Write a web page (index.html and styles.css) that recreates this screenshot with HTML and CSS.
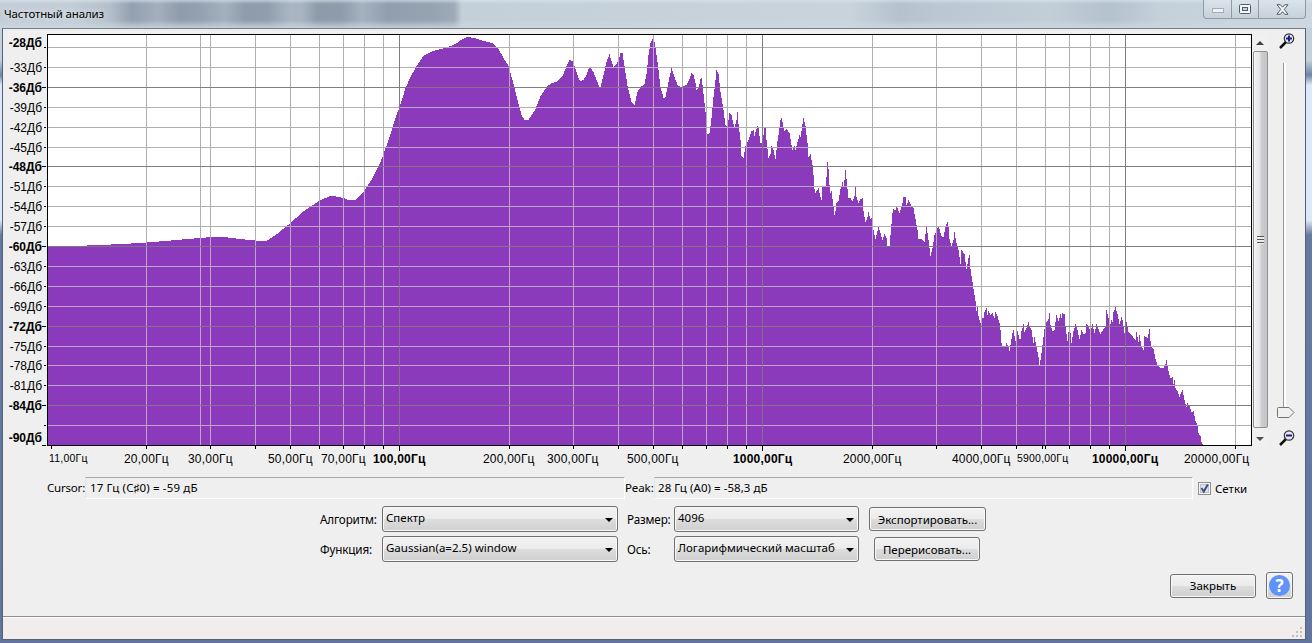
FILE: index.html
```
<!DOCTYPE html>
<html lang="ru">
	<head>
		<meta charset="UTF-8" />
		<title>Частотный анализ</title>
		<link rel="stylesheet" href="styles.css">
	</head>
	<body>
		<div class="window">
			<header class="titlebar">
				<span class="title">Частотный анализ</span>
				<div class="window-buttons">
					<span class="win-btn min"><svg width="12" height="5"><rect x=".5" y=".5" width="11" height="4" fill="#eef2f6" stroke="#a4adb8" /></svg></span>
					<span class="win-btn max"><svg width="12" height="10"><rect x=".5" y=".5" width="11" height="9" rx="1" fill="#f4f6f8" stroke="#535c6a" /><rect x="3.5" y="3.5" width="5" height="3" fill="#c4d0da" stroke="#535c6a" /></svg></span>
					<span class="win-btn close"><svg width="13" height="11" viewBox="0 0 13 11"><path d="M1 .7h3.300l2.200 2.500L8.700 .7H12L8.300 5.400 12 10.300H8.700L6.500 7.700 4.300 10.300H1l3.700-4.900z" fill="#f4f6f8" stroke="#535c6a" /></svg></span>
				</div>
			</header>

			<main class="client">
				<div class="plot-row">
					<svg class="plot" width="1249" height="442" viewBox="3 29 1249 442">
						<rect x="47" y="34" width="1205" height="412" fill="#fff" />
						<path id="spectrum" class="spectrum" />
						<g id="grid"></g>
						<path class="frame" d="M47.500 446V34.500H1251.500V445.500H47" />
						<g id="labels"></g>
					</svg>
					<div class="scrollbar">
						<i class="arrow up"></i>
						<div class="thumb"><i class="grip"></i></div>
						<i class="arrow down"></i>
					</div>
					<div class="zoom">
						<svg width="16" height="16" viewBox="0 0 16 16"><path d="M1 15l6-6" stroke="#111" stroke-width="2.500" /><circle cx="10" cy="5.500" r="4.700" fill="#e9e9fb" stroke="#333" stroke-width="1.200" /><path d="M7 5.500h6M10 2.500v6" stroke="#1c1c84" stroke-width="2" /></svg>
						<div class="slider">
							<svg class="slider-thumb" width="18" height="11" viewBox="0 0 18 11"><path d="M1.500 .5H12l5 5-5 5H1.500a1 1 0 0 1-1-1v-8a1 1 0 0 1 1-1z" fill="#f0f0f0" stroke="#747474" /></svg>
						</div>
						<svg width="16" height="16" viewBox="0 0 16 16"><path d="M1 15l6-6" stroke="#111" stroke-width="2.500" /><circle cx="10" cy="5.500" r="4.700" fill="#e9e9fb" stroke="#333" stroke-width="1.200" /><path d="M7 5.500h6" stroke="#1c1c84" stroke-width="2" /></svg>
					</div>
				</div>

				<div class="readouts">
					<span class="cursor-label">Cursor:</span>
					<div class="readout cursor">17 Гц (C♯0) = -59 дБ</div>
					<span class="peak-label">Peak:</span>
					<div class="readout peak">28 Гц (A0) = -58,3 дБ</div>
					<label class="grids">
						<svg width="13" height="13"><rect x=".5" y=".5" width="12" height="12" fill="#f6f6f6" stroke="#8e8f8f" /><rect x="2.500" y="2.500" width="8" height="8" fill="#dfe4ea" stroke="#b9c3cf" /><path d="M3.500 6l2.300 3.500L9.800 2.500" fill="none" stroke="#3d5082" stroke-width="2" /></svg>
						<span>Сетки</span>
					</label>
				</div>

				<div class="options">
					<span class="opt-label">Алгоритм:</span>
					<div class="select">Спектр</div>
					<span class="opt-label second">Размер:</span>
					<div class="select">4096</div>
					<button class="export">Экспортировать...</button>
					<span class="opt-label">Функция:</span>
					<div class="select">Gaussian(a=2.5) window</div>
					<span class="opt-label second">Ось:</span>
					<div class="select">Логарифмический масштаб</div>
					<button class="redraw">Перерисовать...</button>
				</div>

				<div class="actions">
					<button class="close-btn">Закрыть</button>
					<button class="help"><span>?</span></button>
				</div>

				<footer class="statusbar">
					<svg width="11" height="11"><path d="M8 1h2v2H8zM8 5h2v2H8zM8 9h2v2H8zM4 5h2v2H4zM4 9h2v2H4zM0 9h2v2H0z" fill="#c3bfbf" /></svg>
				</footer>
			</main>
		</div>

		<script src="plot.js"></script>
	</body>
</html>
```

FILE: styles.css
```
body {
	margin: 0;
	overflow: hidden;
	font-family: "Noto Sans", "Open Sans", sans-serif;
	font-size: 12px;
	color: #000;
}
.window {
	box-sizing: border-box;
	width: 1312px;
	height: 643px;
	padding: 0 6px 3px 2px;
	background: linear-gradient(#c4d0da 0 60px, #6b86a8 75px, #dde8f8 85px 220px, #66799f 235px, #62759c);
}
.titlebar {
	display: flex;
	justify-content: space-between;
	height: 28px;
	margin: 0 -6px 0 -2px;
	background:
		linear-gradient(rgba(220, 230, 238, 0.6), transparent 4px 20px, rgba(205, 216, 225, 0.8)),
		linear-gradient(90deg, #c3cdd7 0 70px, #b3bfca 110px, #93a0af 132px, #a3afbc 158px, #8f9cab 180px, #94a1b0 200px, #a3b0bd 225px, #8f9cab 245px, #919eae 268px, #a9b6c2 290px, #a7b4c1 302px, #8d9aa9 318px, #8f9cab 342px, #a4b1be 362px, #919eae 388px, #95a3b1 430px, #9daab7 454px, #c4d0d9 462px, #c8d3dc 850px, #b5c2ce 900px, #bbc8d3 940px, #c2ced8 1050px, #b4c2ce 1110px, #c4d0da 1160px, #ccd7e0);
}
.title {
	padding: 6px 0 0 4px;
	line-height: 16px;
	font-size: 11.500px;
	letter-spacing: -0.150px;
	text-shadow: 0 0 6px #fff;
}
.window-buttons {
	display: flex;
	box-sizing: border-box;
	width: 103px;
	height: 19px;
	margin-right: 6px;
	border: 1px solid #8f9aa6;
	border-top: 0;
	border-radius: 0 0 4px 4px;
	background: linear-gradient(#dbe3ea, #c6d1db);
}
.win-btn {
	display: flex;
	align-items: center;
	justify-content: center;
	width: 27px;
	border-right: 1px solid #8f9aa6;
}
.win-btn.min {
	align-items: flex-end;
	padding-bottom: 5px;
	height: 13px;
}
.win-btn.max {
	width: 26px;
}
.win-btn.close {
	width: 46px;
	border: 0;
}
.client {
	box-sizing: border-box;
	height: 612px;
	border: 1px solid #55607a;
	border-top-color: #757e88;
	background: #efefef;
	display: flex;
	flex-direction: column;
}
.plot-row {
	display: flex;
	height: 442px;
}
.plot {
	flex: none;
	shape-rendering: crispEdges;
}
.spectrum {
	fill: #8b3abc;
}
.frame {
	fill: none;
	stroke: #000;
}
.minor {
	fill: #afafaf;
}
.major {
	fill: #7f7f7f;
}
.inside .minor {
	fill: #bda4c8;
}
.inside .major {
	fill: #88708a;
}
.plot text {
	font-family: "Liberation Sans", Arial, sans-serif;
	font-size: 12px;
}
.plot .freq {
	letter-spacing: 0.200px;
}
.plot text.bold {
	font-weight: bold;
}
.plot text.small {
	font-size: 10.500px;
}
.scrollbar {
	display: flex;
	flex-direction: column;
	align-items: center;
	width: 17px;
	height: 412px;
	margin-top: 5px;
	background: #f0f0f0;
}
.arrow {
	border: 4px solid transparent;
}
.arrow.up {
	margin: 7px 0 6px;
	border-top: 0;
	border-bottom-color: #404040;
}
.arrow.down {
	margin-top: 9px;
	border-bottom: 0;
	border-top-color: #505050;
}
.thumb {
	display: flex;
	align-items: center;
	justify-content: center;
	box-sizing: border-box;
	width: 15px;
	height: 377px;
	border: 1px solid #8f8f8f;
	border-radius: 2px;
	background: linear-gradient(90deg, #f4f4f4, #e4e4e6 45%, #cdced1 55%, #c2c3c7);
}
.grip {
	width: 7px;
	height: 8px;
	background: repeating-linear-gradient(#555 0 1px, #eee 1px 3px);
}
.zoom {
	display: flex;
	flex-direction: column;
	align-items: center;
	width: 36px;
	padding: 4px 0 0 1px;
}
.slider {
	width: 2px;
	height: 355px;
	margin: 14px 5px 12px 0;
	border-left: 1px solid #999;
	background: #fff;
}
.slider-thumb {
	display: block;
	margin: 344px 0 0 -7px;
}
.readouts {
	display: flex;
	align-items: flex-start;
	height: 35px;
	padding: 6px 0 0 44px;
	line-height: 21px;
	font-size: 11.500px;
	box-sizing: border-box;
}
.cursor-label {
	width: 38px;
	letter-spacing: -0.200px;
}
.peak-label {
	width: 29px;
	letter-spacing: -0.100px;
}
.readout {
	box-sizing: border-box;
	height: 22px;
	padding-left: 4px;
	border: 1px solid #fff;
	border-top-color: #a8a8a8;
	border-left-color: #e6e6e6;
	line-height: 20px;
}
.readout.cursor {
	width: 540px;
	letter-spacing: 0.150px;
}
.readout.peak {
	width: 539px;
	padding-left: 3px;
	letter-spacing: 0.050px;
}
.grids {
	display: flex;
	align-items: center;
	gap: 4px;
	height: 22px;
	margin-left: 5px;
}
.options {
	display: grid;
	grid-template-columns: 62px 236px 56px 185px 136px;
	grid-auto-rows: 26px;
	row-gap: 4px;
	align-items: center;
	padding-left: 317px;
}
.opt-label {
	font-size: 11.700px;
	letter-spacing: -0.150px;
}
.opt-label.second {
	padding-left: 9px;
}
.select {
	position: relative;
	box-sizing: border-box;
	height: 26px;
	padding-left: 3px;
	border: 1px solid #707070;
	border-radius: 3px;
	background: linear-gradient(#f3f3f3, #ebebeb 48%, #dddddd 52%, #cfcfcf);
	box-shadow: inset 0 0 0 1px #f8f8f8;
	font-size: 11.500px;
	line-height: 22px;
	white-space: nowrap;
}
.select::after {
	content: "";
	position: absolute;
	top: 11px;
	right: 4px;
	border: 4px solid transparent;
	border-top-color: #000;
	border-bottom: 0;
}
button {
	box-sizing: border-box;
	height: 24px;
	padding: 0;
	border: 1px solid #707070;
	border-radius: 3px;
	background: linear-gradient(#f3f3f3, #ebebeb 48%, #dddddd 52%, #cfcfcf);
	box-shadow: inset 0 0 0 1px #f8f8f8;
	font-family: inherit;
	font-size: 11.500px;
	color: #000;
}
.export {
	width: 117px;
	margin-left: 10px;
}
.redraw {
	width: 106px;
	margin-left: 15px;
}
.actions {
	display: flex;
	justify-content: flex-end;
	align-items: center;
	gap: 10px;
	margin-top: 10px;
	padding-right: 12px;
}
.close-btn {
	width: 86px;
}
.help {
	display: flex;
	align-items: center;
	justify-content: center;
	width: 27px;
	height: 27px;
}
.help span {
	width: 21px;
	height: 21px;
	border-radius: 50%;
	background: #5f92fa;
	color: #fff;
	font-size: 17px;
	font-weight: bold;
	line-height: 21px;
}
.statusbar {
	display: flex;
	justify-content: flex-end;
	align-items: flex-end;
	box-sizing: border-box;
	height: 23px;
	margin-top: auto;
	padding: 0 2px 2px 0;
	border-top: 1px solid #8c8c8c;
	background: #f1eded;
	box-shadow: inset 0 1px #fff;
}
```

FILE: plot.js
```
const NS = "http://www.w3.org/2000/svg";
const LEFT = 48;
const RIGHT = 1251;
const TOP = 35;
const BOTTOM = 445;

// outline of the spectrum, x y pairs
const points = `48 246 86 245.500 110 244.500 130 243.500 146 242.500 176 240 205 237.500 220 236.500
240 239 255 240.500 266 241 277 233.500 290 223 302 212 319 200.500 331 195.500 343 198 348 200
355 200 364 190.500 372 178 380 162 388 140 395 118 401 101 405 88 410 77 416 66 423 56 432 51
445 48 455 44 462 39 467 37 474 38 483 41 492 43 498 49 503 58 508 66 512 80 517 100 521 115
524 119.500 528 119.500 534 111 540 96 546 87 551 83 556 82 562 76 567 64 569 60 572 61 575 69
578 78 580 81 583 80 586 75 588 69 590 67.500 593 72 597 82 599 87 600 87 603 75 606 62 609 54
611 61 613 67 616 64 618 60 620 53 622 53 624 66 627 86 631 102 634 105 637 92 640 87 644 84
646 74 648 55 650 43 653 37 655 47 658 70 660 87 663 98 665 97 668 82 671 68 674 77 677 85
681 87 686 85 689 79 691 73 693 75 695 83 696 90 698 88 700 79 701 78 702 85 704 103 706 120
707 134 709 133 711 118 713 97 715 80 716 70 718 74 720 92 723 110 725 125 727 127 729 113
731 115 733 124 734 127 736 120 737 112 738 124 740 140 741 156 743 158 745 146 748 140 751 131
753 130 754 136 755 132 757 126 758 128 760 143 762 142 764 128 765 127 766 140 768 158 770 154
771 146 773 150 775 159 777 141 779 128 780 120 781 118 782 122 784 131 786 129 789 133 791 145
792 150 794 146 795 150 797 142 799 135 800 137 802 124 803 118 805 126 807 143 808 157 810 154
812 165 813 175 814 189 815 193 818 188 820 197 821 200 822 187 825 186 826 177 827 162 828 169
829 185 830 193 831 191 833 207 834 215 835 211 836 203 838 201 840 189 842 182 843 186 844 180
845 170 846 179 848 198 850 198 852 201 854 196 855 187 856 197 858 203 860 199 862 198 863 211
865 222 867 217 868 212 870 219 872 216 873 230 875 239 877 231 878 226 880 233 882 240 884 234
886 238 887 246 889 246 890 235 892 213 893 209 895 210 896 206 899 213 902 203 903 197 905 197
906 205 908 200 911 206 913 208 915 219 917 230 918 239 921 239 924 242 926 226 927 233 928 240
930 256 932 248 934 235 936 230 938 226 941 236 943 237 945 226 947 222 948 226 949 239 951 246
953 240 954 232 956 243 958 250 960 264 961 250 964 254 966 269 968 258 969 255 970 269 972 282
974 295 975 301 976 311 977 306 978 316 980 323 982 318 983 318 984 312 986 308 987 315 988 311
990 315 992 313 994 318 995 312 997 316 999 323 1000 330 1001 343 1002 347 1005 347 1006 343
1008 347 1009 351 1010 345 1012 333 1013 330 1015 341 1016 347 1017 331 1019 339 1020 339
1021 331 1023 324 1024 332 1026 328 1028 322 1029 326 1031 330 1033 343 1034 337 1036 346
1038 357 1039 366 1041 353 1042 345 1044 329 1045 335 1046 322 1048 319 1049 313 1050 325
1052 331 1054 330 1055 322 1056 315 1058 321 1060 314 1061 318 1062 313 1064 314 1065 327
1067 341 1068 332 1070 333 1071 343 1073 331 1075 324 1077 330 1079 339 1081 330 1083 334
1085 333 1086 324 1088 326 1090 332 1092 324 1094 333 1096 324 1098 329 1100 334 1103 329
1105 326 1106 310 1108 318 1109 327 1111 320 1112 322 1113 312 1115 307 1117 314 1119 324
1121 317 1122 320 1124 333 1126 322 1128 332 1131 335 1135 340 1136 332 1138 342 1139 335
1141 346 1143 350 1144 336 1147 338 1149 329 1150 341 1151 347 1153 349 1155 359 1157 365
1160 368 1163 368 1165 364 1166 360 1168 371 1170 378 1172 377 1173 384 1174 380 1175 388
1177 391 1179 397 1180 394 1182 390 1184 400 1186 407 1187 403 1189 406 1191 412 1193 411
1195 421 1197 425 1198 433 1200 436 1201 442 1203 445`.split(/\s+/).map(Number);

// one column per pixel
const heights = [];
for (let i = 0; i + 3 < points.length; i += 2) {
	const [x0, y0, x1, y1] = points.slice(i, i + 4);
	for (let x = x0; x <= x1; x++) {
		heights[x] = Math.round(y0 + ((y1 - y0) * (x - x0)) / (x1 - x0));
	}
}
let d = `M${LEFT} ${BOTTOM}`;
for (let x = LEFT; x < 1204; x++) {
	d += `V${heights[x]}h1`;
}
d += `V${BOTTOM}z`;
document.getElementById("spectrum").setAttribute("d", d);

function add(parent, name, attrs, text) {
	const el = document.createElementNS(NS, name);
	for (const key in attrs) el.setAttribute(key, attrs[key]);
	if (text) el.textContent = text;
	parent.appendChild(el);
	return el;
}

const grid = document.getElementById("grid");
const labels = document.getElementById("labels");
const clip = add(grid, "clipPath", { id: "under" });
add(clip, "path", { d });
const outside = add(grid, "g", {});
const inside = add(grid, "g", { class: "inside", "clip-path": "url(#under)" });

function line(x, y, width, height, major) {
	const attrs = { x, y, width, height, class: major ? "major" : "minor" };
	add(outside, "rect", attrs);
	add(inside, "rect", attrs);
}

// [y, label, major]
const rows = [
	[47], [67, "-33Дб"], [87, "-36Дб", 1], [107, "-39Дб"], [127, "-42Дб"], [147, "-45Дб"],
	[166, "-48Дб", 1], [186, "-51Дб"], [206, "-54Дб"], [226, "-57Дб"], [246, "-60Дб", 1],
	[266, "-63Дб"], [286, "-66Дб"], [306, "-69Дб"], [326, "-72Дб", 1], [346, "-75Дб"],
	[365, "-78Дб"], [385, "-81Дб"], [405, "-84Дб", 1], [425],
];
const minorCols = [146, 200, 210, 255, 290, 319, 343, 364, 383, 509, 573, 618, 653, 682, 706, 727,
	746, 872, 936, 981, 1016, 1045, 1069, 1090, 1109, 1235];
const majorCols = [399, 762, 1125];

for (const [y] of rows.filter((r) => !r[2])) line(LEFT, y, RIGHT - LEFT, 1);
for (const x of minorCols) line(x, TOP, 1, BOTTOM - TOP);
for (const [y] of rows.filter((r) => r[2])) line(LEFT, y, RIGHT - LEFT, 1, true);
for (const x of majorCols) line(x, TOP, 1, BOTTOM - TOP, true);

function yLabel(y, text, bold) {
	add(labels, "text", { x: 42, y, "text-anchor": "end", class: bold ? "bold" : "" }, text);
}
for (const [y, text, major] of rows) {
	if (text) yLabel(y + 5, text, major);
	add(labels, "rect", { x: major ? 42 : 44, y, width: major ? 4 : 2, height: 1 });
}
yLabel(47, "-28Дб", true);
yLabel(442, "-90Дб", true);
add(labels, "rect", { x: 42, y: 445, width: 4, height: 1 });

for (const x of [51, 1042, ...minorCols.filter((c) => c !== 200)]) {
	add(labels, "rect", { x, y: 446, width: 1, height: 3 });
}
for (const x of majorCols) add(labels, "rect", { x, y: 446, width: 1, height: 5 });

// [x, label, class]
const freqs = [
	[49, "11,00Гц", "small"], [124, "20,00Гц"], [188, "30,00Гц"], [268, "50,00Гц"],
	[321, "70,00Гц"], [373, "100,00Гц", "bold"], [483, "200,00Гц"],
	[547, "300,00Гц"], [627, "500,00Гц"], [733, "1000,00Гц", "bold"],
	[843, "2000,00Гц"], [952, "4000,00Гц"], [1017, "5900,00Гц", "small"],
	[1092, "10000,00Гц", "bold"], [1184, "20000,00Гц"],
];
for (const [x, text, cls] of freqs) {
	add(labels, "text", { x, y: cls === "small" ? 462 : 463, class: `freq ${cls || ""}` }, text);
}
```
